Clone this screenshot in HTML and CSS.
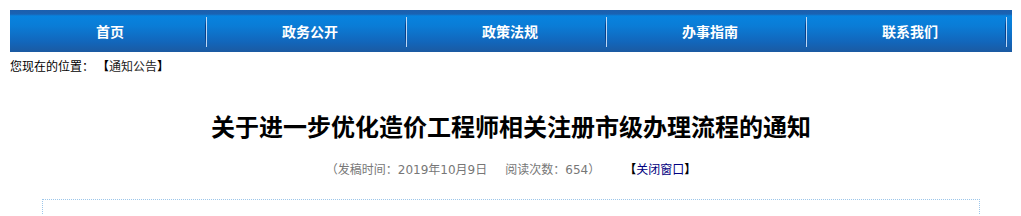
FILE: index.html
```html
<!DOCTYPE html>
<html lang="zh-CN">
<head>
<meta charset="utf-8">
<title>关于进一步优化造价工程师相关注册市级办理流程的通知</title>
<link rel="stylesheet" href="styles.css">
</head>
<body>
<div class="page">
  <nav class="nav">
    <a class="nav-item" href="#">首页</a>
    <a class="nav-item" href="#">政务公开</a>
    <a class="nav-item" href="#">政策法规</a>
    <a class="nav-item" href="#">办事指南</a>
    <a class="nav-item" href="#">联系我们</a>
  </nav>
  <div class="crumb">
    <span class="crumb-label">您现在的位置：</span><span class="br">【</span><a class="crumb-link" href="#">通知公告</a><span class="br">】</span>
  </div>
  <h1 class="title">关于进一步优化造价工程师相关注册市级办理流程的通知</h1>
  <div class="meta">
    <span>（发稿时间：2019年10月9日</span><span class="gap1">阅读次数：654）</span><span class="close"><span class="br">【</span><a class="close-link" href="#">关闭窗口</a><span class="br">】</span></span>
  </div>
  <div class="content"></div>
</div>
</body>
</html>
```
FILE: styles.css
```css
html, body {
  margin: 0;
  padding: 0;
  background: #fff;
}
body {
  font-family: "Noto Sans CJK SC", "DejaVu Sans", sans-serif;
  font-size: 12px;
  color: #000;
}
.page {
  width: 1002px;
  padding: 10px 0 0 10px;
}
.nav {
  display: flex;
  height: 42px;
  background: linear-gradient(to bottom, #1b5fae 0px, #1a62b2 4px, #0783df 6px, #0a7cd6 16px, #1266bb 32px, #1b5aa2 42px);
}
.nav-item {
  position: relative;
  width: 200px;
  flex: none;
  display: flex;
  align-items: center;
  justify-content: center;
  color: #fff;
  font-weight: bold;
  font-size: 14px;
  text-decoration: none;
  line-height: 42px;
}
.nav-item::after {
  content: "";
  position: absolute;
  top: 7px;
  bottom: 5px;
  left: 195px;
  width: 1px;
  background: linear-gradient(to bottom, rgba(10,60,130,0) 0%, #0b3f86 30%, #0b3f86 70%, rgba(10,60,130,0) 100%);
  box-shadow: 1px 0 0 rgba(220,235,255,0.85);
}
.crumb {
  height: 28px;
  line-height: 28px;
  font-size: 12px;
  color: #000;
}
.crumb-label {
  margin-right: 9px;
}
.br {
  font-weight: bold;
  color: #000;
}
.crumb-link {
  color: #222;
  text-decoration: none;
}
.title {
  margin: 26px 0 0;
  height: 40px;
  line-height: 40px;
  font-size: 24px;
  font-weight: bold;
  text-align: center;
  color: #000;
}
.meta {
  margin-top: 11px;
  height: 24px;
  line-height: 24px;
  text-align: center;
  color: #777;
  font-size: 12px;
  font-family: "DejaVu Sans", "Noto Sans CJK SC", sans-serif;
}
.gap1 {
  margin-left: 18px;
}
.close {
  margin-left: 30px;
  font-family: "Noto Sans CJK SC", sans-serif;
}
.close-link {
  color: #000080;
  text-decoration: none;
}
.content {
  margin: 18px 32px 0;
  height: 14px;
  border: 1px dotted #9cc6ea;
  border-bottom: none;
}
```
